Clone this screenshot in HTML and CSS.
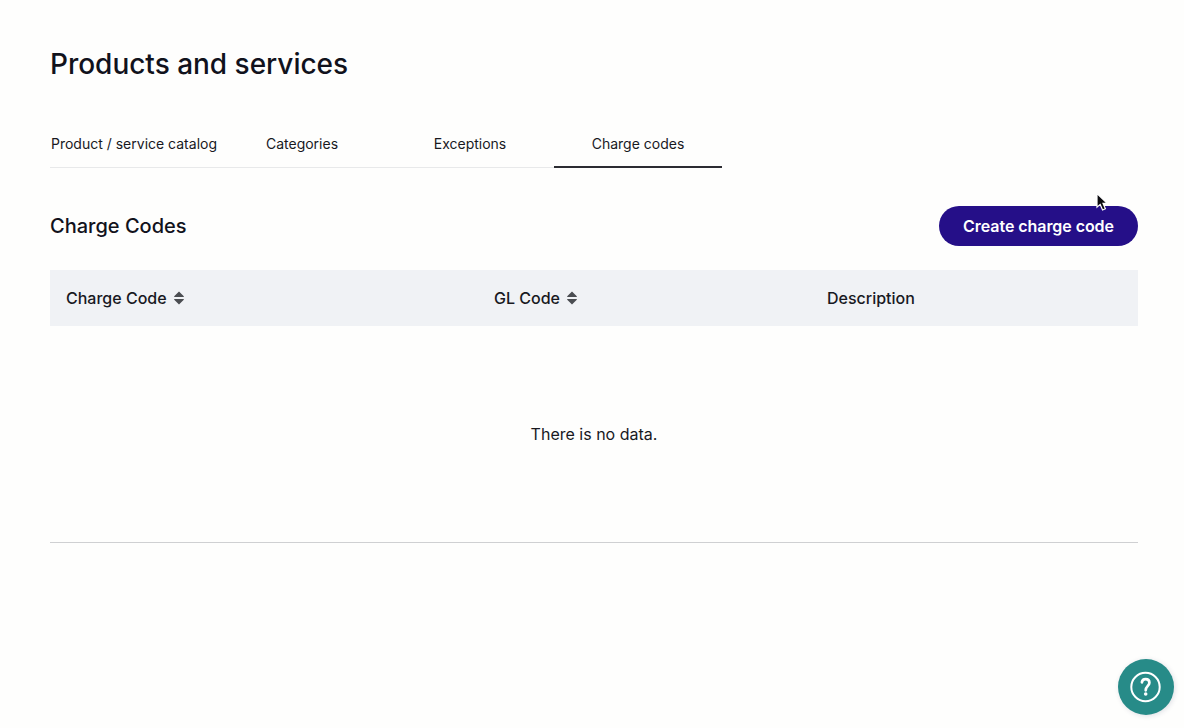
FILE: index.html
```html
<!DOCTYPE html>
<html lang="en">
<head>
  <meta charset="UTF-8">
  <title>Products and services</title>
  <link rel="stylesheet" href="styles.css">
</head>
<body>
  <main class="page">
    <h1 class="page-title">Products and services</h1>

    <nav class="tabs">
      <a class="tab">Product / service catalog</a>
      <a class="tab">Categories</a>
      <a class="tab">Exceptions</a>
      <a class="tab active">Charge codes</a>
    </nav>

    <div class="section-header">
      <h2 class="section-title">Charge Codes</h2>
      <button class="create-button">Create charge code</button>
    </div>

    <!-- Charge codes table -->
    <div class="table">
      <div class="table-head">
        <div class="col">Charge Code
          <svg class="sort-icon" width="10" height="14" viewBox="0 0 10 14"><path d="M5 0.6L9.8 5.2V6H0.2V5.2zM5 13.4L9.8 8.8V8H0.2V8.8z"/></svg>
        </div>
        <div class="col">GL Code
          <svg class="sort-icon" width="10" height="14" viewBox="0 0 10 14"><path d="M5 0.6L9.8 5.2V6H0.2V5.2zM5 13.4L9.8 8.8V8H0.2V8.8z"/></svg>
        </div>
        <div class="col">Description</div>
      </div>
      <div class="table-empty">There is no data.</div>
    </div>
  </main>

  <button class="help-button" aria-label="Help">
    <svg class="help-icon" width="56" height="56" viewBox="0 0 56 56">
      <circle cx="27.5" cy="28" r="14.2" stroke-width="2"/>
      <path d="M23.9 23.3C24.2 21.2 25.7 20.2 27.6 20.2C29.9 20.2 31.4 21.6 31.4 23.7C31.4 26.8 27.7 27 27.7 31.3" stroke-width="2.7"/>
      <circle class="dot" cx="27.7" cy="35" r="1.8"/>
    </svg>
  </button>

  <svg class="cursor" width="14" height="20" viewBox="0 0 14 20"><path d="M2 1.5V15.2L5.2 12.4L7.6 18L10.4 16.8L8 11.4H12.2z"/></svg>
</body>
</html>
```
FILE: styles.css
```css
* {
  box-sizing: border-box;
}

body {
  margin: 0;
  height: 100vh;
  font-family: Inter, "Liberation Sans", sans-serif;
  background-color: #fefefd;
  color: #18191f;
  overflow: hidden;
}

.page {
  padding: 44px 46px 0 50px;
}

.page-title {
  margin: 0;
  color: #11121c;
  font-size: 28px;
  line-height: 40px;
  font-weight: 500;
  letter-spacing: -0.02px;
}

/* Tabs */
.tabs {
  display: flex;
  width: 672px;
  margin-top: 36px;
  border-bottom: 1px solid #e8e9ea;
}

.tab {
  flex: 1;
  height: 48px;
  margin-bottom: -1px;
  font-size: 14px;
  line-height: 48px;
  text-align: center;
  white-space: nowrap;
}

.tab.active {
  border-bottom: 2px solid #2c2c32;
}

/* Section header */
.section-header {
  display: flex;
  justify-content: space-between;
  align-items: center;
  margin-top: 38px;
}

.section-title {
  margin: 0;
  color: #11121c;
  font-size: 20px;
  font-weight: 500;
}

.create-button {
  width: 199px;
  height: 40px;
  padding: 0;
  border: none;
  border-radius: 20px;
  background-color: #250f88;
  color: white;
  font-family: inherit;
  font-size: 16px;
  font-weight: 600;
  letter-spacing: -0.06px;
}

/* Table */
.table {
  margin-top: 24px;
  border-bottom: 1px solid #cfd0d2;
}

.table-head {
  display: grid;
  grid-template-columns: 428px 333px 1fr;
  height: 56px;
  background-color: #f0f2f5;
}

.col {
  display: flex;
  align-items: center;
  gap: 7px;
  padding-left: 16px;
  font-size: 16px;
  font-weight: 500;
}

.sort-icon {
  fill: #4b4e52;
}

.table-empty {
  height: 216px;
  font-size: 16px;
  line-height: 216px;
  text-align: center;
}

/* Floating help button */
.help-button {
  position: absolute;
  right: 10px;
  bottom: 13px;
  width: 56px;
  height: 56px;
  padding: 0;
  border: none;
  border-radius: 50%;
  background-color: #278b88;
  box-shadow: 1px 1px 5px rgba(40, 50, 90, 0.15);
}

.help-icon {
  display: block;
  fill: none;
  stroke: white;
  stroke-linecap: round;
}

.help-icon .dot {
  fill: white;
  stroke: none;
}

.cursor {
  position: absolute;
  left: 1095px;
  top: 192px;
  fill: #0b0b0f;
  stroke: white;
  stroke-width: 1.2;
}
```
